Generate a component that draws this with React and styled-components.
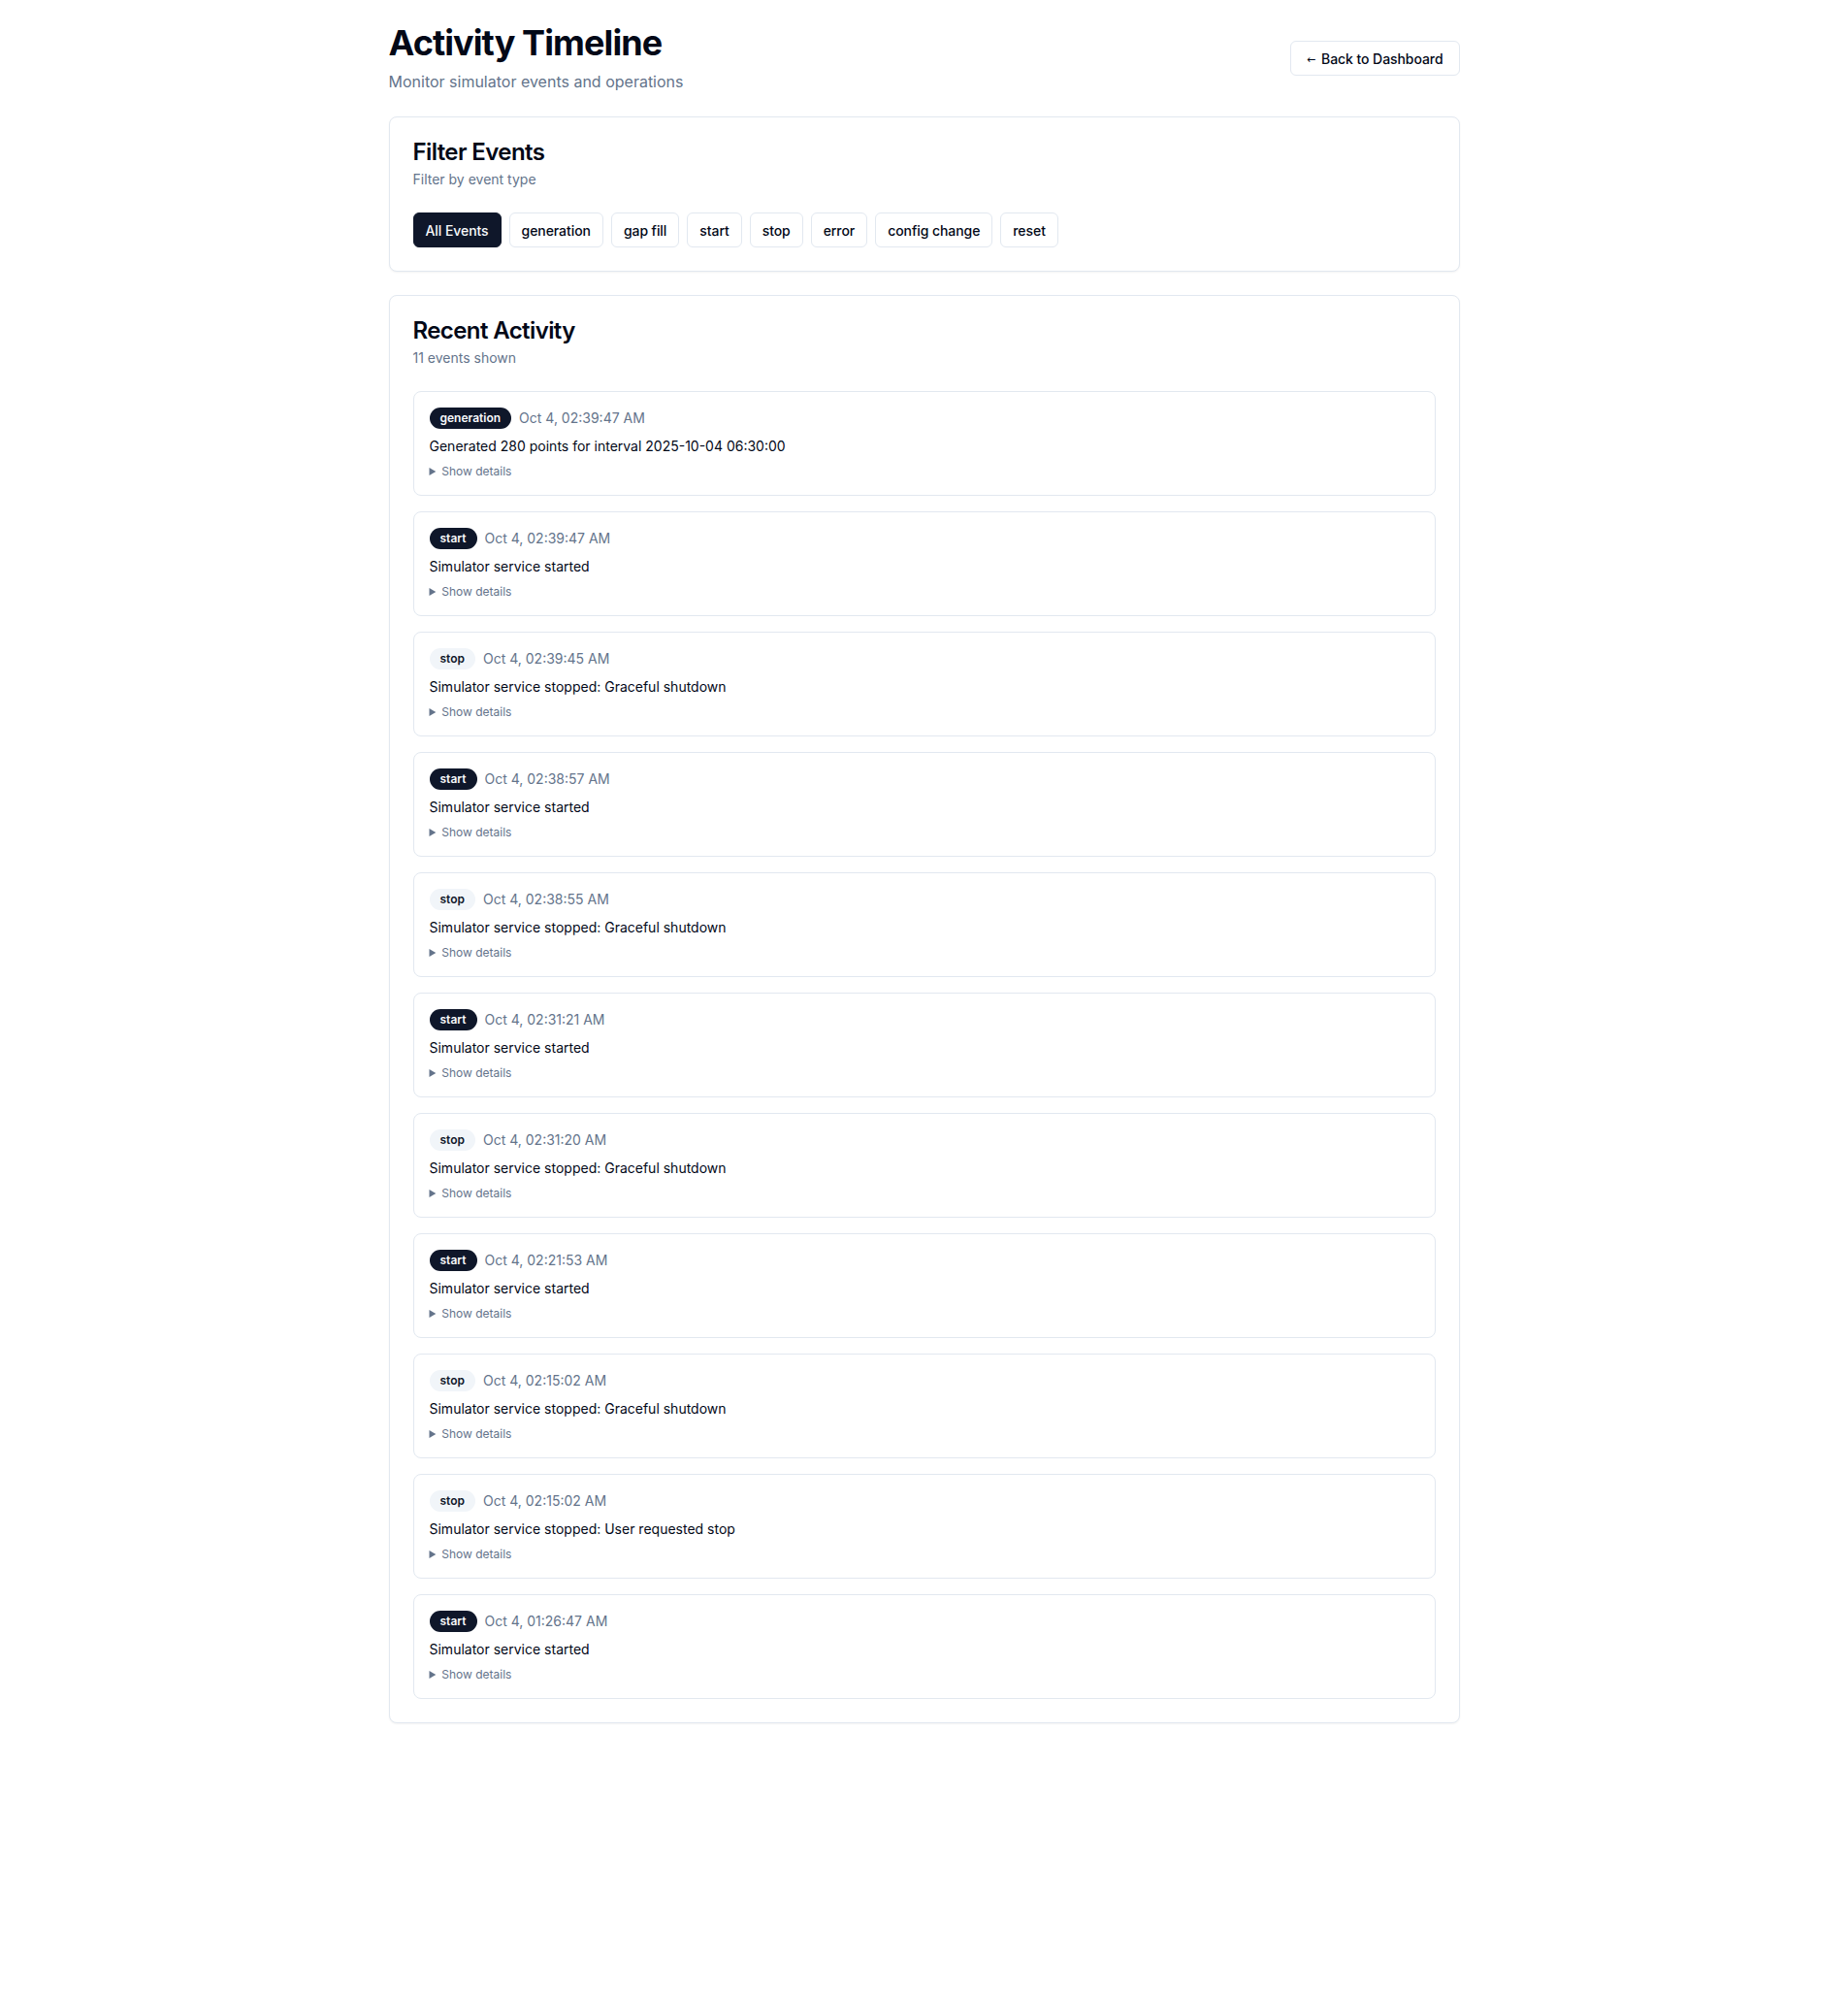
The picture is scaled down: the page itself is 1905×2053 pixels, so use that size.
import React, { useState } from 'react';
import styled, { createGlobalStyle } from 'styled-components';

const GlobalStyle = createGlobalStyle`
  * { box-sizing: border-box; }
  body {
    margin: 0;
    background: #ffffff;
    color: #020817;
    font-family: Inter, "Noto Sans", "Liberation Sans", sans-serif;
    -webkit-font-smoothing: antialiased;
  }
`

const Page = styled.div`
  max-width: 1152px;
  margin: 0 auto;
  padding: 24px;
`

const Header = styled.div`
  display: flex;
  justify-content: space-between;
  align-items: center;
  margin-bottom: 24px;
`

const PageTitle = styled.h1`
  margin: 0;
  font-size: 36px;
  line-height: 40px;
  font-weight: 700;
  letter-spacing: -0.025em;
`

const PageSubtitle = styled.p`
  margin: 8px 0 0;
  font-size: 16px;
  line-height: 24px;
  color: #64748b;
`

const Button = styled.button`
  display: inline-flex;
  align-items: center;
  justify-content: center;
  height: 36px;
  padding: 0 ${p => (p.$wide ? '16px' : '12px')};
  border-radius: 6px;
  font-family: inherit;
  font-size: 14px;
  font-weight: 500;
  letter-spacing: -0.005em;
  white-space: nowrap;
  cursor: pointer;
  border: 1px solid ${p => (p.$active ? '#0f172a' : '#e2e8f0')};
  background: ${p => (p.$active ? '#0f172a' : '#ffffff')};
  color: ${p => (p.$active ? '#f8fafc' : '#020817')};
`

const Arrow = styled.span`
  font-family: "DejaVu Sans", sans-serif;
  font-size: 11px;
  margin-right: 6px;
  position: relative;
  top: 1px;
`

const Card = styled.div`
  border: 1px solid #e2e8f0;
  border-radius: 8px;
  background: #ffffff;
  box-shadow: 0 1px 2px 0 rgba(0, 0, 0, 0.05);
  margin-bottom: 24px;
`

const CardHeader = styled.div`
  display: flex;
  flex-direction: column;
  gap: 6px;
  padding: 24px;
`

const CardTitle = styled.h3`
  margin: 0;
  font-size: 24px;
  line-height: 24px;
  font-weight: 600;
  letter-spacing: -0.025em;
`

const CardDescription = styled.p`
  margin: 0;
  font-size: 14px;
  line-height: 20px;
  color: #64748b;
`

const CardContent = styled.div`
  padding: 0 24px 24px;
`

const FilterRow = styled.div`
  display: flex;
  flex-wrap: wrap;
  gap: 8px;
`

const EventList = styled.div`
  display: flex;
  flex-direction: column;
  gap: 16px;
`

const EventItem = styled.div`
  border: 1px solid #e2e8f0;
  border-radius: 8px;
  padding: 16px;
`

const EventMeta = styled.div`
  display: flex;
  align-items: center;
  gap: 8px;
`

const Badge = styled.span`
  display: inline-flex;
  align-items: center;
  border-radius: 9999px;
  border: 1px solid transparent;
  padding: 2px 10px;
  font-size: 12px;
  line-height: 16px;
  font-weight: 600;
  background: ${p => (p.$variant === 'secondary' ? '#f1f5f9' : '#0f172a')};
  color: ${p => (p.$variant === 'secondary' ? '#0f172a' : '#f8fafc')};
`

const Timestamp = styled.span`
  font-size: 14px;
  line-height: 20px;
  color: #64748b;
`

const Message = styled.p`
  margin: 8px 0 0;
  font-size: 14px;
  line-height: 20px;
`

const Details = styled.details`
  margin-top: 8px;
`

const Summary = styled.summary`
  font-size: 12px;
  line-height: 16px;
  color: #64748b;
  cursor: pointer;
`

const DetailsPre = styled.pre`
  margin: 8px 0 0;
  padding: 8px;
  border-radius: 6px;
  background: #f1f5f9;
  font-size: 12px;
  overflow: auto;
`

const filters = [
  { key: 'all', label: 'All Events' },
  { key: 'generation', label: 'generation' },
  { key: 'gap_fill', label: 'gap fill' },
  { key: 'start', label: 'start' },
  { key: 'stop', label: 'stop' },
  { key: 'error', label: 'error' },
  { key: 'config_change', label: 'config change' },
  { key: 'reset', label: 'reset' },
];

const events = [
  { type: 'generation', time: 'Oct 4, 02:39:47 AM', message: 'Generated 280 points for interval 2025-10-04 06:30:00', details: { points: 280, interval: '2025-10-04 06:30:00' } },
  { type: 'start', time: 'Oct 4, 02:39:47 AM', message: 'Simulator service started', details: {} },
  { type: 'stop', time: 'Oct 4, 02:39:45 AM', message: 'Simulator service stopped: Graceful shutdown', details: { reason: 'Graceful shutdown' } },
  { type: 'start', time: 'Oct 4, 02:38:57 AM', message: 'Simulator service started', details: {} },
  { type: 'stop', time: 'Oct 4, 02:38:55 AM', message: 'Simulator service stopped: Graceful shutdown', details: { reason: 'Graceful shutdown' } },
  { type: 'start', time: 'Oct 4, 02:31:21 AM', message: 'Simulator service started', details: {} },
  { type: 'stop', time: 'Oct 4, 02:31:20 AM', message: 'Simulator service stopped: Graceful shutdown', details: { reason: 'Graceful shutdown' } },
  { type: 'start', time: 'Oct 4, 02:21:53 AM', message: 'Simulator service started', details: {} },
  { type: 'stop', time: 'Oct 4, 02:15:02 AM', message: 'Simulator service stopped: Graceful shutdown', details: { reason: 'Graceful shutdown' } },
  { type: 'stop', time: 'Oct 4, 02:15:02 AM', message: 'Simulator service stopped: User requested stop', details: { reason: 'User requested stop' } },
  { type: 'start', time: 'Oct 4, 01:26:47 AM', message: 'Simulator service started', details: {} },
];

const badgeVariant = type => (type === 'stop' ? 'secondary' : 'default');

const App = () => {
  const [filter, setFilter] = useState('all');
  const shown = filter === 'all' ? events : events.filter(e => e.type === filter);

  return (
    <>
      <GlobalStyle />
      <Page>
        <Header>
          <div>
            <PageTitle>Activity Timeline</PageTitle>
            <PageSubtitle>Monitor simulator events and operations</PageSubtitle>
          </div>
          <Button $wide><Arrow>←</Arrow>Back to Dashboard</Button>
        </Header>

        <Card>
          <CardHeader>
            <CardTitle>Filter Events</CardTitle>
            <CardDescription>Filter by event type</CardDescription>
          </CardHeader>
          <CardContent>
            <FilterRow>
              {filters.map(f => (
                <Button key={f.key} $active={filter === f.key} onClick={() => setFilter(f.key)}>
                  {f.label}
                </Button>
              ))}
            </FilterRow>
          </CardContent>
        </Card>

        <Card>
          <CardHeader>
            <CardTitle>Recent Activity</CardTitle>
            <CardDescription>{shown.length} events shown</CardDescription>
          </CardHeader>
          <CardContent>
            <EventList>
              {shown.map((e, i) => (
                <EventItem key={i}>
                  <EventMeta>
                    <Badge $variant={badgeVariant(e.type)}>{e.type}</Badge>
                    <Timestamp>{e.time}</Timestamp>
                  </EventMeta>
                  <Message>{e.message}</Message>
                  <Details>
                    <Summary>Show details</Summary>
                    <DetailsPre>{JSON.stringify(e.details, null, 2)}</DetailsPre>
                  </Details>
                </EventItem>
              ))}
            </EventList>
          </CardContent>
        </Card>
      </Page>
    </>
  );
};

export default App;
